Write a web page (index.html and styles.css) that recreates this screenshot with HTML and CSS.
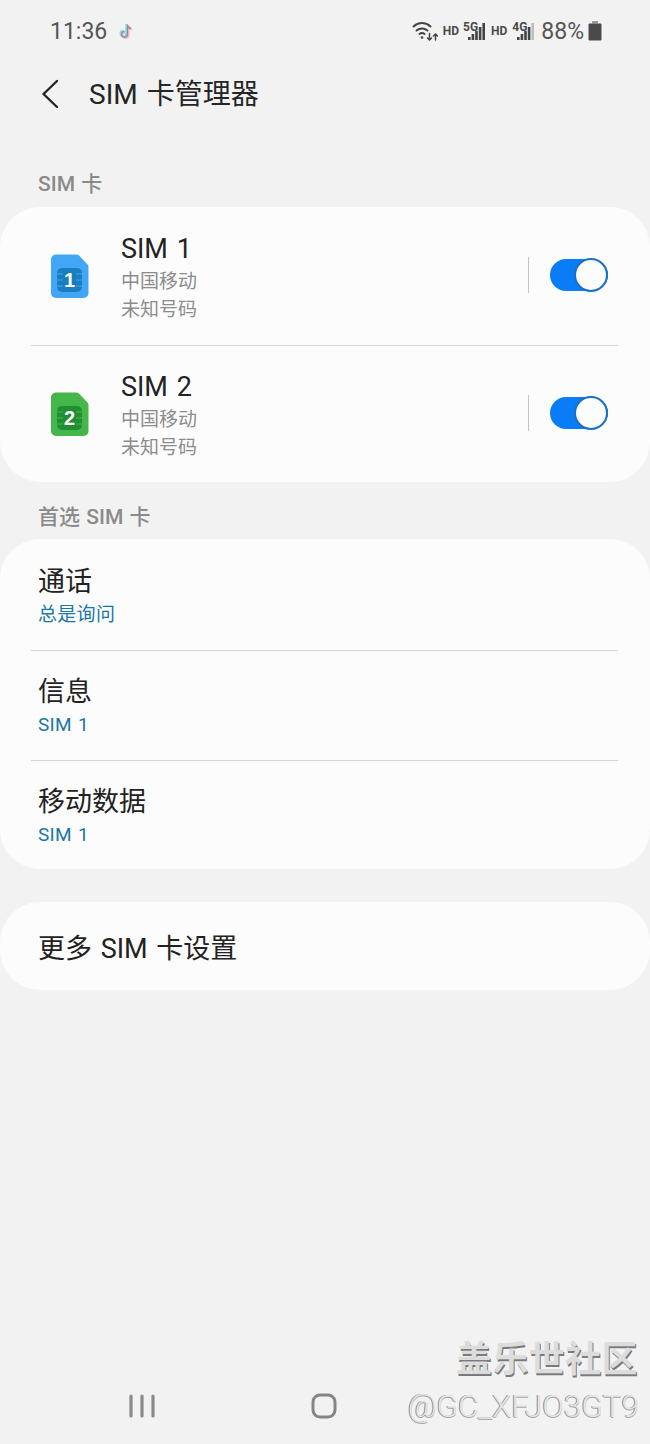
FILE: index.html
```html
<!DOCTYPE html>
<html lang="zh-CN">
<head>
  <meta charset="UTF-8" />
  <meta name="viewport" content="width=device-width, initial-scale=1.0"/>
  <title>SIM 卡管理器</title>
  <link rel="stylesheet" href="styles.css">
</head>
<body>
  <div class="phone">
    <div class="status-bar">
      <div class="status-left">
        <span class="clock">11:36</span>
        <svg class="tiktok" width="17" height="18" viewBox="0 0 17 18" fill="none" stroke-width="2.400">
          <path d="M8.500 2v9.700a2.900 2.900 0 1 1-2.900-2.900M8.500 2.500c.3 2 1.700 3.200 3.600 3.400" stroke="#7fdfe6"/>
          <path d="M10.300 3.200v9.700a2.900 2.900 0 1 1-2.900-2.900M10.300 3.700c.3 2 1.700 3.200 3.600 3.400" stroke="#f6b4c8"/>
          <path d="M9.400 2.600v9.700a2.900 2.900 0 1 1-2.900-2.900M9.400 3.100c.3 2 1.700 3.200 3.600 3.400" stroke="#8b9096" stroke-width="1.300"/>
        </svg>
      </div>
      <div class="status-right">
        <svg class="wifi" width="26" height="20" viewBox="0 0 26 20" fill="none" stroke="#444" stroke-width="2" stroke-linecap="round">
          <path d="M1.500 5.500C6.500.9 13.500.9 18.500 5.500"/>
          <path d="M4.500 9.500c3.200-2.800 7.800-2.800 11 0"/>
          <path d="M7.500 13c1.500-1.200 3.500-1.200 5 0"/>
          <circle cx="10" cy="16.500" r="1.300" fill="#444" stroke="none"/>
          <path d="M17.500 12.500v6.500M15.500 17l2 2 2-2M23.500 19v-6M21.500 15l2-2 2 2" stroke-width="1.500"/>
        </svg>
        <span class="hd">HD</span>
        <span class="signal">
          <span class="net">5G</span>
          <svg width="17" height="17" viewBox="0 0 17 17" fill="#444">
            <rect x="0" y="14" width="2.600" height="3"/>
            <rect x="3.600" y="11" width="2.600" height="6"/>
            <rect x="7.200" y="8" width="2.600" height="9"/>
            <rect x="10.800" y="4" width="2.600" height="13"/>
            <rect x="14.400" y="0" width="2.600" height="17"/>
          </svg>
        </span>
        <span class="hd hd-second">HD</span>
        <span class="signal">
          <span class="net">4G</span>
          <svg width="17" height="17" viewBox="0 0 17 17" fill="#444">
            <rect x="0" y="14" width="2.600" height="3"/>
            <rect x="3.600" y="11" width="2.600" height="6"/>
            <rect x="7.200" y="8" width="2.600" height="9"/>
            <rect x="10.800" y="4" width="2.600" height="13"/>
            <rect x="14.400" y="0" width="2.600" height="17" fill="#bdbdbd"/>
          </svg>
        </span>
        <span class="battery-text">88%</span>
        <svg width="14" height="20" viewBox="0 0 14 20" fill="#4a4a4a">
          <rect x="4" y="0" width="6" height="2.500" fill="#999"/>
          <rect x="0.500" y="2.500" width="13" height="17" rx="1"/>
        </svg>
      </div>
    </div>

    <div class="app-bar">
      <svg class="back" width="18" height="30" viewBox="0 0 18 30" fill="none" stroke="#252525" stroke-width="2.400" stroke-linecap="round" stroke-linejoin="round">
        <path d="M16 2 2.500 15 16 28"/>
      </svg>
      <h1>SIM 卡管理器</h1>
    </div>

    <div class="section-label label-first">SIM 卡</div>
    <div class="card">
      <div class="sim-row">
        <svg class="sim-icon" width="38" height="44" viewBox="0 0 38 44">
          <path d="M5 .500h20c1.500 0 2.500.5 3.500 1.500l7.500 8c1 1 1.500 2 1.500 3.500V39a5 5 0 0 1-5 5H5a5 5 0 0 1-5-5V5.500a5 5 0 0 1 5-5z" fill="#42a5f5"/>
          <rect x="6" y="14" width="25" height="24" rx="5" fill="#1a7dc2"/>
          <path d="M6 20h6M6 26h6M6 32h6M25 20h6M25 26h6M25 32h6" stroke="#4aa6e6" stroke-width="1"/>
          <text class="sim-num" x="18.500" y="33">1</text>
        </svg>
        <div class="sim-text">
          <div class="sim-name">SIM 1</div>
          <div class="sim-sub">中国移动</div>
          <div class="sim-sub">未知号码</div>
        </div>
        <div class="vline"></div>
        <div class="switch"><div class="knob"></div></div>
      </div>
      <div class="divider divider-low"></div>
      <div class="sim-row">
        <svg class="sim-icon" width="38" height="44" viewBox="0 0 38 44">
          <path d="M5 .500h20c1.500 0 2.500.5 3.500 1.500l7.500 8c1 1 1.500 2 1.500 3.500V39a5 5 0 0 1-5 5H5a5 5 0 0 1-5-5V5.500a5 5 0 0 1 5-5z" fill="#45b649"/>
          <rect x="6" y="14" width="25" height="24" rx="5" fill="#1f8f31"/>
          <path d="M6 20h6M6 26h6M6 32h6M25 20h6M25 26h6M25 32h6" stroke="#4cb552" stroke-width="1"/>
          <text class="sim-num" x="18.500" y="33">2</text>
        </svg>
        <div class="sim-text">
          <div class="sim-name">SIM 2</div>
          <div class="sim-sub">中国移动</div>
          <div class="sim-sub">未知号码</div>
        </div>
        <div class="vline"></div>
        <div class="switch"><div class="knob"></div></div>
      </div>
    </div>

    <div class="section-label label-second">首选 SIM 卡</div>
    <div class="card pref-card">
      <div class="pref-row">
        <div class="pref-title">通话</div>
        <div class="pref-value">总是询问</div>
      </div>
      <div class="divider"></div>
      <div class="pref-row">
        <div class="pref-title">信息</div>
        <div class="pref-value">SIM 1</div>
      </div>
      <div class="divider"></div>
      <div class="pref-row">
        <div class="pref-title">移动数据</div>
        <div class="pref-value">SIM 1</div>
      </div>
    </div>

    <div class="card more-card">更多 SIM 卡设置</div>

    <div class="nav-bar">
      <svg width="26" height="24" viewBox="0 0 26 24" fill="none" stroke="#8a8a8a" stroke-width="3.200" stroke-linecap="round">
        <path d="M2 2v20M13 2v20M24 2v20"/>
      </svg>
      <svg class="nav-home" width="26" height="26" viewBox="0 0 26 26" fill="none" stroke="#858585" stroke-width="3">
        <rect x="2" y="2" width="22" height="22" rx="7"/>
      </svg>
    </div>

    <div class="watermark">
      <div class="wm-title">盖乐世社区</div>
      <div class="wm-user">@GC_XFJO3GT9</div>
    </div>
  </div>
</body>
</html>
```

FILE: styles.css
```css
* {
  box-sizing: border-box;
}

html, body {
  margin: 0;
  padding: 0;
}

body {
  font-family: Roboto, "Noto Sans CJK SC", sans-serif;
  background: #f2f2f2;
}

.phone {
  position: relative;
  width: 650px;
  height: 1444px;
  overflow: hidden;
  background: #f2f2f2;
  color: #222;
}

.status-bar {
  height: 62px;
  padding: 0 48px 0 50px;
  display: flex;
  justify-content: space-between;
  align-items: center;
}

.status-left {
  display: flex;
  align-items: center;
  gap: 11px;
}

.clock {
  font-size: 23px;
  color: #555;
}

.status-right {
  display: flex;
  align-items: center;
  color: #4a4a4a;
}

.wifi {
  margin-right: 5px;
}

.hd {
  font-size: 12px;
  font-weight: 700;
  margin-right: 4px;
}

.hd-second {
  margin-left: 6px;
  margin-right: 5px;
}

.signal {
  position: relative;
  display: flex;
  width: 22px;
  justify-content: flex-end;
}

.net {
  position: absolute;
  left: 0;
  top: -3px;
  font-size: 12px;
  font-weight: 700;
}

.battery-text {
  font-size: 23px;
  margin: 0 4px 0 7px;
  color: #555;
}

.app-bar {
  height: 64px;
  display: flex;
  align-items: center;
  padding-left: 41px;
}

.back {
  flex: none;
}

h1 {
  margin: 0 0 5px 30px;
  font-size: 28px;
  font-weight: 400;
  word-spacing: 2px;
  color: #252525;
}

.section-label {
  font-size: 21px;
  font-weight: 500;
  word-spacing: 1px;
  color: #8a8a8a;
  padding-left: 38px;
  line-height: 28px;
}

.label-first {
  margin-top: 44px;
  height: 37px;
}

.label-second {
  margin-top: 21px;
  height: 36px;
}

.card {
  background: #fcfcfc;
  border-radius: 40px;
}

.sim-row {
  height: 137px;
  display: flex;
  align-items: center;
  padding: 0 42px 0 51px;
}

.sim-icon {
  flex: none;
}

.sim-num {
  font-family: "Liberation Sans", sans-serif;
  font-size: 20px;
  font-weight: 700;
  fill: #fff;
  text-anchor: middle;
}

.sim-text {
  margin-left: 32px;
  padding-top: 2px;
  flex: 1;
}

.sim-name {
  font-size: 27px;
  line-height: 38px;
  word-spacing: 2px;
  color: #222;
}

.sim-sub {
  font-size: 19px;
  line-height: 28px;
  color: #8c8c8c;
}

.vline {
  width: 1px;
  height: 36px;
  background: #c4c4c4;
  margin: 0 21px 2px 0;
}

.switch {
  position: relative;
  width: 58px;
  height: 32px;
  margin-bottom: 2px;
  border-radius: 16px;
  background: #0a7cf5;
}

.knob {
  position: absolute;
  right: 0;
  top: -1px;
  width: 34px;
  height: 34px;
  border-radius: 50%;
  background: #fcfcfc;
  border: 2px solid #1a70c8;
}

.divider {
  height: 1px;
  margin: 0 32px 0 31px;
  background: #d6d6d6;
}

.divider-low {
  margin: 1px 32px -1px 31px;
}

.pref-card {
  padding-top: 2px;
}

.pref-row {
  height: 109px;
  padding: 22px 38px 0;
}

.pref-row:last-child {
  height: 108px;
}

.pref-title {
  font-size: 27px;
  line-height: 38px;
  color: #222;
}

.pref-value {
  font-size: 19px;
  line-height: 28px;
  letter-spacing: 0.3px;
  word-spacing: 1px;
  color: #1a76a8;
}

.more-card {
  margin-top: 33px;
  height: 88px;
  padding-left: 38px;
  display: flex;
  align-items: center;
  font-size: 27px;
  word-spacing: 2px;
}

.nav-bar {
  position: absolute;
  left: 129px;
  top: 1393px;
  display: flex;
  align-items: center;
}

.nav-home {
  margin-left: 156px;
}

.watermark {
  position: absolute;
  right: 12px;
  top: 1338px;
  text-align: right;
}

.wm-title {
  font-size: 36px;
  font-weight: 700;
  line-height: 44px;
  letter-spacing: 0.4px;
  color: #dcdcdc;
  text-shadow: 1px 2px 0 #7a7a7a;
}

.wm-user {
  margin-top: 5px;
  margin-right: -1px;
  font-size: 31.5px;
  font-weight: 300;
  line-height: 40px;
  color: #e6e6e6;
  text-shadow: -1px 0 0 #8a8a8a, 0 1px 0 #a8a8a8;
}
```
